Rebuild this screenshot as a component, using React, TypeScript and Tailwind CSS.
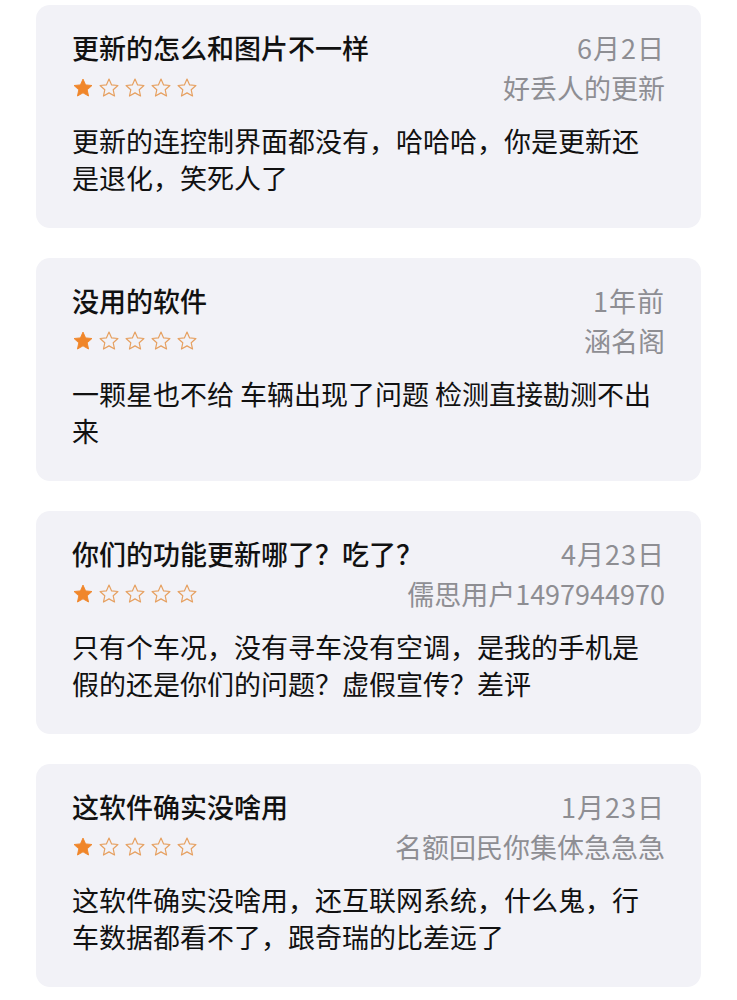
import React from 'react';

type Review = {
  title: string;
  date: string;
  author: string;
  body: string;
  rating: number;
};

const reviews: Review[] = [
  {
    title: '更新的怎么和图片不一样',
    date: '6月2日',
    author: '好丢人的更新',
    body: '更新的连控制界面都没有，哈哈哈，你是更新还是退化，笑死人了',
    rating: 1,
  },
  {
    title: '没用的软件',
    date: '1年前',
    author: '涵名阁',
    body: '一颗星也不给 车辆出现了问题 检测直接勘测不出来',
    rating: 1,
  },
  {
    title: '你们的功能更新哪了？吃了？',
    date: '4月23日',
    author: '儒思用户1497944970',
    body: '只有个车况，没有寻车没有空调，是我的手机是假的还是你们的问题？虚假宣传？差评',
    rating: 1,
  },
  {
    title: '这软件确实没啥用',
    date: '1月23日',
    author: '名额回民你集体急急急',
    body: '这软件确实没啥用，还互联网系统，什么鬼，行车数据都看不了，跟奇瑞的比差远了',
    rating: 1,
  },
];

const Star: React.FC<{ filled: boolean }> = ({ filled }) => (
  <svg width="22" height="22" viewBox="0 0 24 24">
    <path
      d="M12 2.3l2.85 6.3 6.9.7-5.15 4.65 1.45 6.8L12 17.3l-6.05 3.45 1.45-6.8L2.25 9.3l6.9-.7z"
      fill={filled ? '#f0862a' : 'none'}
      stroke={filled ? '#f0862a' : '#e6a060'}
      strokeWidth={filled ? 1 : 1.3}
      strokeLinejoin="round"
    />
  </svg>
);

const ReviewCard: React.FC<{ review: Review }> = ({ review }) => (
  <div className="rounded-[14px] bg-[#f2f2f7] px-9 pt-[23px] pb-[32px]">
    {/* title + date */}
    <div className="flex items-center justify-between whitespace-nowrap text-[27px] leading-[40px]">
      <span className="font-medium text-[#111]">{review.title}</span>
      <span className="tracking-[1px] text-[#8e8e93]">{review.date}</span>
    </div>
    {/* stars + author */}
    <div className="flex h-[40px] items-center justify-between whitespace-nowrap">
      <div className="flex items-center gap-1">
        {[0, 1, 2, 3, 4].map((i) => (
          <Star key={i} filled={i < review.rating} />
        ))}
      </div>
      <span className="text-[27px] leading-[40px] text-[#8e8e93]">{review.author}</span>
    </div>
    <p className="mt-[14px] text-[27px] leading-[37px] text-[#111]">{review.body}</p>
  </div>
);

export default function App() {
  return (
    <div
      className="min-h-screen bg-white px-9 pt-[5px]"
      style={{ fontFamily: '"Noto Sans CJK SC", "Noto Sans", sans-serif' }}
    >
      <div className="flex flex-col gap-[30px]">
        {reviews.map((r) => (
          <ReviewCard key={r.title} review={r} />
        ))}
      </div>
    </div>
  );
}
